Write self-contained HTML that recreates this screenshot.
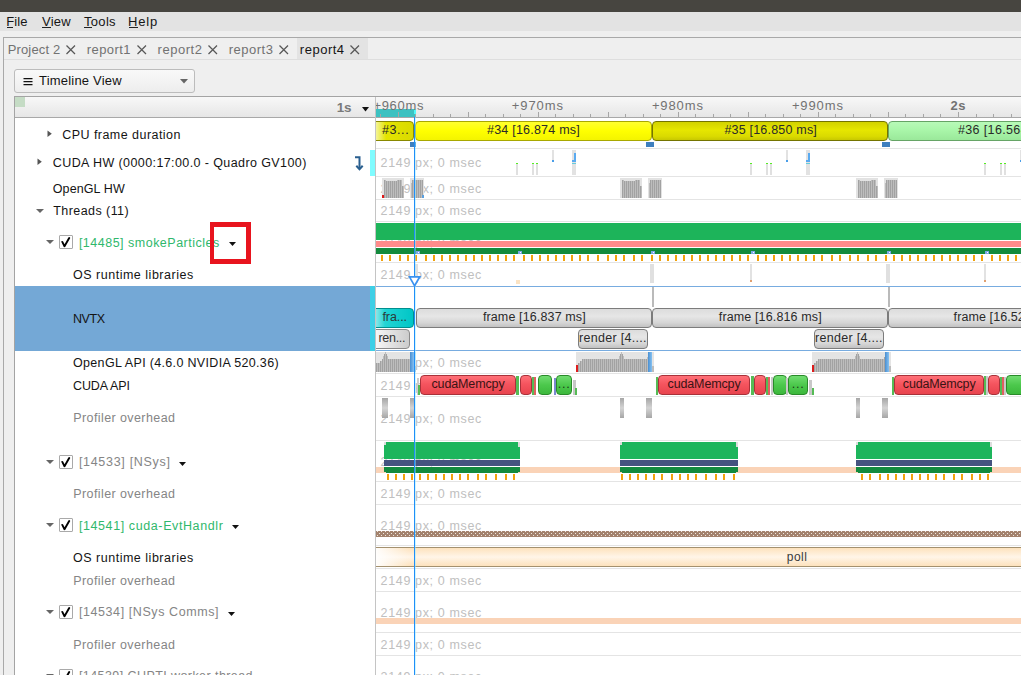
<!DOCTYPE html>
<html><head><meta charset="utf-8"><style>
html,body{margin:0;padding:0;width:1021px;height:675px;overflow:hidden;background:#efefef}
body{position:relative;font-family:"Liberation Sans",sans-serif}
.r,.t,.clip{position:absolute}
.t{white-space:pre}
.clip{overflow:hidden}
</style></head><body>
<div class="r" style="left:0px;top:0px;width:1021px;height:12px;background:#474540;"></div>
<div class="r" style="left:0px;top:12px;width:1021px;height:19px;background:#e3e3e3;"></div>
<div class="t" style="left:6.20px;top:13.69px;font-size:13px;line-height:16px;color:#161616;letter-spacing:0.100px;font-weight:normal;">File</div>
<div class="t" style="left:42.00px;top:13.69px;font-size:13px;line-height:16px;color:#161616;letter-spacing:0.267px;font-weight:normal;">View</div>
<div class="t" style="left:84.10px;top:13.69px;font-size:13px;line-height:16px;color:#161616;letter-spacing:0.275px;font-weight:normal;">Tools</div>
<div class="t" style="left:128.00px;top:13.69px;font-size:13px;line-height:16px;color:#161616;letter-spacing:0.833px;font-weight:normal;">Help</div>
<div class="r" style="left:7px;top:27px;width:6px;height:1px;background:#222;"></div>
<div class="r" style="left:42px;top:27px;width:9px;height:1px;background:#222;"></div>
<div class="r" style="left:84px;top:27px;width:8px;height:1px;background:#222;"></div>
<div class="r" style="left:129px;top:27px;width:9px;height:1px;background:#222;"></div>
<div class="r" style="left:0px;top:31px;width:1021px;height:644px;background:#efefef;"></div>
<div class="r" style="left:3px;top:37px;width:1018px;height:1px;background:#a9a9a9;"></div>
<div class="r" style="left:3px;top:37px;width:1px;height:638px;background:#a9a9a9;"></div>
<div class="r" style="left:297px;top:38px;width:71px;height:21px;background:#e3e3e3;"></div>
<div class="r" style="left:4px;top:59px;width:1017px;height:1px;background:#dedede;"></div>
<div class="t" style="left:7.70px;top:42.29px;font-size:13px;line-height:16px;color:#727272;letter-spacing:0.150px;font-weight:normal;">Project 2</div>
<svg class="r" style="left:66.1px;top:44.8px" width="10" height="10"><path d="M0.5 0.5L9 9M9 0.5L0.5 9" stroke="#585858" stroke-width="1.25"/></svg>
<div class="t" style="left:86.80px;top:42.29px;font-size:13px;line-height:16px;color:#727272;letter-spacing:0.417px;font-weight:normal;">report1</div>
<svg class="r" style="left:136.8px;top:44.8px" width="10" height="10"><path d="M0.5 0.5L9 9M9 0.5L0.5 9" stroke="#585858" stroke-width="1.25"/></svg>
<div class="t" style="left:157.60px;top:42.29px;font-size:13px;line-height:16px;color:#727272;letter-spacing:0.517px;font-weight:normal;">report2</div>
<svg class="r" style="left:208.1px;top:44.8px" width="10" height="10"><path d="M0.5 0.5L9 9M9 0.5L0.5 9" stroke="#585858" stroke-width="1.25"/></svg>
<div class="t" style="left:228.70px;top:42.29px;font-size:13px;line-height:16px;color:#727272;letter-spacing:0.517px;font-weight:normal;">report3</div>
<svg class="r" style="left:278.8px;top:44.8px" width="10" height="10"><path d="M0.5 0.5L9 9M9 0.5L0.5 9" stroke="#585858" stroke-width="1.25"/></svg>
<div class="t" style="left:299.80px;top:42.29px;font-size:13px;line-height:16px;color:#151515;letter-spacing:0.517px;font-weight:normal;">report4</div>
<svg class="r" style="left:349.9px;top:44.8px" width="10" height="10"><path d="M0.5 0.5L9 9M9 0.5L0.5 9" stroke="#585858" stroke-width="1.25"/></svg>
<div class="r" style="left:14px;top:69px;width:179px;height:22px;border:1px solid #bcbcbc;border-radius:3px;background:linear-gradient(#f9f9f9,#ededed)"></div>
<svg class="r" style="left:23px;top:77px" width="10" height="9"><path d="M0.5 1.5H9.5M0.5 4.5H9.5M0.5 7.5H9.5" stroke="#111" stroke-width="1.25"/></svg>
<div class="t" style="left:39.10px;top:72.99px;font-size:13px;line-height:16px;color:#141414;letter-spacing:0.192px;font-weight:normal;">Timeline View</div>
<svg class="r" style="left:180px;top:79px" width="8" height="5"><path d="M0 0H8L4 4.5Z" fill="#666"/></svg>
<div class="r" style="left:14px;top:96px;width:1007px;height:1px;background:#a4a4a4;"></div>
<div class="r" style="left:14px;top:96px;width:1px;height:579px;background:#a4a4a4;"></div>
<div class="r" style="left:15px;top:97px;width:1006px;height:20px;background:linear-gradient(#f8f8f8,#e6e6e6);"></div>
<div class="r" style="left:15px;top:117px;width:1006px;height:1px;background:#a8a8a8;"></div>
<div class="r" style="left:15px;top:97px;width:10px;height:10px;background:#c5dcc5;"></div>
<div class="t" style="left:336.70px;top:100.12px;font-size:13.5px;line-height:16px;color:#7a7a7a;letter-spacing:-0.100px;font-weight:bold;">1s</div>
<svg class="r" style="left:361.5px;top:106.5px" width="8" height="6"><path d="M0 0H7L3.5 4.5Z" fill="#111"/></svg>
<div class="r" style="left:15px;top:118px;width:1006px;height:557px;background:#ffffff;"></div>
<div class="r" style="left:375px;top:97px;width:1px;height:578px;background:#c4c4c4;"></div>
<div class="r" style="left:376px;top:109px;width:40px;height:8px;background:#3dc1c1;"></div>
<div class="r" style="left:414px;top:109px;width:2px;height:5px;background:#52f7f7;"></div>
<div class="r" style="left:380px;top:114px;width:1px;height:3px;background:#a6a6a6;"></div>
<div class="r" style="left:398px;top:112px;width:1px;height:5px;background:#a6a6a6;"></div>
<div class="r" style="left:415px;top:114px;width:1px;height:3px;background:#a6a6a6;"></div>
<div class="r" style="left:433px;top:114px;width:1px;height:3px;background:#a6a6a6;"></div>
<div class="r" style="left:450px;top:114px;width:1px;height:3px;background:#a6a6a6;"></div>
<div class="r" style="left:468px;top:112px;width:1px;height:5px;background:#a6a6a6;"></div>
<div class="r" style="left:485px;top:114px;width:1px;height:3px;background:#a6a6a6;"></div>
<div class="r" style="left:503px;top:114px;width:1px;height:3px;background:#a6a6a6;"></div>
<div class="r" style="left:520px;top:114px;width:1px;height:3px;background:#a6a6a6;"></div>
<div class="r" style="left:538px;top:112px;width:1px;height:5px;background:#a6a6a6;"></div>
<div class="r" style="left:555px;top:114px;width:1px;height:3px;background:#a6a6a6;"></div>
<div class="r" style="left:573px;top:114px;width:1px;height:3px;background:#a6a6a6;"></div>
<div class="r" style="left:590px;top:114px;width:1px;height:3px;background:#a6a6a6;"></div>
<div class="r" style="left:608px;top:112px;width:1px;height:5px;background:#a6a6a6;"></div>
<div class="r" style="left:625px;top:114px;width:1px;height:3px;background:#a6a6a6;"></div>
<div class="r" style="left:643px;top:114px;width:1px;height:3px;background:#a6a6a6;"></div>
<div class="r" style="left:660px;top:114px;width:1px;height:3px;background:#a6a6a6;"></div>
<div class="r" style="left:678px;top:112px;width:1px;height:5px;background:#a6a6a6;"></div>
<div class="r" style="left:695px;top:114px;width:1px;height:3px;background:#a6a6a6;"></div>
<div class="r" style="left:713px;top:114px;width:1px;height:3px;background:#a6a6a6;"></div>
<div class="r" style="left:730px;top:114px;width:1px;height:3px;background:#a6a6a6;"></div>
<div class="r" style="left:748px;top:112px;width:1px;height:5px;background:#a6a6a6;"></div>
<div class="r" style="left:765px;top:114px;width:1px;height:3px;background:#a6a6a6;"></div>
<div class="r" style="left:783px;top:114px;width:1px;height:3px;background:#a6a6a6;"></div>
<div class="r" style="left:800px;top:114px;width:1px;height:3px;background:#a6a6a6;"></div>
<div class="r" style="left:818px;top:112px;width:1px;height:5px;background:#a6a6a6;"></div>
<div class="r" style="left:835px;top:114px;width:1px;height:3px;background:#a6a6a6;"></div>
<div class="r" style="left:853px;top:114px;width:1px;height:3px;background:#a6a6a6;"></div>
<div class="r" style="left:870px;top:114px;width:1px;height:3px;background:#a6a6a6;"></div>
<div class="r" style="left:888px;top:112px;width:1px;height:5px;background:#a6a6a6;"></div>
<div class="r" style="left:905px;top:114px;width:1px;height:3px;background:#a6a6a6;"></div>
<div class="r" style="left:923px;top:114px;width:1px;height:3px;background:#a6a6a6;"></div>
<div class="r" style="left:940px;top:114px;width:1px;height:3px;background:#a6a6a6;"></div>
<div class="r" style="left:958px;top:112px;width:1px;height:5px;background:#a6a6a6;"></div>
<div class="r" style="left:976px;top:114px;width:1px;height:3px;background:#a6a6a6;"></div>
<div class="r" style="left:993px;top:114px;width:1px;height:3px;background:#a6a6a6;"></div>
<div class="r" style="left:1011px;top:114px;width:1px;height:3px;background:#a6a6a6;"></div>
<div class="clip" style="left:376px;top:96px;width:645px;height:21px">
<div class="t" style="left:-2.60px;top:2.09px;font-size:13px;line-height:16px;color:#727272;letter-spacing:0.680px;font-weight:normal;">+960ms</div>
<div class="t" style="left:135.80px;top:2.09px;font-size:13px;line-height:16px;color:#727272;letter-spacing:0.920px;font-weight:normal;">+970ms</div>
<div class="t" style="left:275.90px;top:2.09px;font-size:13px;line-height:16px;color:#727272;letter-spacing:0.880px;font-weight:normal;">+980ms</div>
<div class="t" style="left:415.90px;top:2.09px;font-size:13px;line-height:16px;color:#727272;letter-spacing:0.880px;font-weight:normal;">+990ms</div>
<div class="t" style="left:574.40px;top:2.09px;font-size:13px;line-height:16px;color:#727272;letter-spacing:0.600px;font-weight:bold;">2s</div>
</div>
<div class="r" style="left:376px;top:148px;width:645px;height:1px;background:#e4e4e4;"></div>
<div class="r" style="left:376px;top:176px;width:645px;height:1px;background:#e4e4e4;"></div>
<div class="r" style="left:376px;top:199px;width:645px;height:1px;background:#e4e4e4;"></div>
<div class="r" style="left:376px;top:221px;width:645px;height:1px;background:#e4e4e4;"></div>
<div class="r" style="left:376px;top:262px;width:645px;height:1px;background:#e4e4e4;"></div>
<div class="r" style="left:376px;top:373px;width:645px;height:1px;background:#e4e4e4;"></div>
<div class="r" style="left:376px;top:396px;width:645px;height:1px;background:#e4e4e4;"></div>
<div class="r" style="left:376px;top:440px;width:645px;height:1px;background:#e4e4e4;"></div>
<div class="r" style="left:376px;top:481px;width:645px;height:1px;background:#e4e4e4;"></div>
<div class="r" style="left:376px;top:504px;width:645px;height:1px;background:#e4e4e4;"></div>
<div class="r" style="left:376px;top:545px;width:645px;height:1px;background:#e4e4e4;"></div>
<div class="r" style="left:376px;top:568px;width:645px;height:1px;background:#e4e4e4;"></div>
<div class="r" style="left:376px;top:591px;width:645px;height:1px;background:#e4e4e4;"></div>
<div class="r" style="left:376px;top:632px;width:645px;height:1px;background:#e4e4e4;"></div>
<div class="r" style="left:376px;top:655px;width:645px;height:1px;background:#e4e4e4;"></div>
<div class="t" style="left:380.60px;top:155.97px;font-size:12.5px;line-height:15px;color:#c0c0c0;letter-spacing:0.643px;font-weight:normal;">2149 px; 0 msec</div>
<div class="t" style="left:380.60px;top:181.97px;font-size:12.5px;line-height:15px;color:#c0c0c0;letter-spacing:0.643px;font-weight:normal;">2149 px; 0 msec</div>
<div class="t" style="left:380.60px;top:203.77px;font-size:12.5px;line-height:15px;color:#c0c0c0;letter-spacing:0.643px;font-weight:normal;">2149 px; 0 msec</div>
<div class="t" style="left:380.60px;top:235.97px;font-size:12.5px;line-height:15px;color:#c0c0c0;letter-spacing:0.643px;font-weight:normal;">2149 px; 0 msec</div>
<div class="t" style="left:380.60px;top:267.97px;font-size:12.5px;line-height:15px;color:#c0c0c0;letter-spacing:0.643px;font-weight:normal;">2149 px; 0 msec</div>
<div class="t" style="left:380.60px;top:355.97px;font-size:12.5px;line-height:15px;color:#c0c0c0;letter-spacing:0.643px;font-weight:normal;">2149 px; 0 msec</div>
<div class="t" style="left:380.60px;top:378.97px;font-size:12.5px;line-height:15px;color:#c0c0c0;letter-spacing:0.643px;font-weight:normal;">2149 px; 0 msec</div>
<div class="t" style="left:380.60px;top:411.97px;font-size:12.5px;line-height:15px;color:#c0c0c0;letter-spacing:0.643px;font-weight:normal;">2149 px; 0 msec</div>
<div class="t" style="left:380.60px;top:454.97px;font-size:12.5px;line-height:15px;color:#c0c0c0;letter-spacing:0.643px;font-weight:normal;">2149 px; 0 msec</div>
<div class="t" style="left:380.60px;top:486.97px;font-size:12.5px;line-height:15px;color:#c0c0c0;letter-spacing:0.643px;font-weight:normal;">2149 px; 0 msec</div>
<div class="t" style="left:380.60px;top:518.97px;font-size:12.5px;line-height:15px;color:#c0c0c0;letter-spacing:0.643px;font-weight:normal;">2149 px; 0 msec</div>
<div class="t" style="left:380.60px;top:550.97px;font-size:12.5px;line-height:15px;color:#c0c0c0;letter-spacing:0.643px;font-weight:normal;">2149 px; 0 msec</div>
<div class="t" style="left:380.60px;top:573.97px;font-size:12.5px;line-height:15px;color:#c0c0c0;letter-spacing:0.643px;font-weight:normal;">2149 px; 0 msec</div>
<div class="t" style="left:380.60px;top:605.97px;font-size:12.5px;line-height:15px;color:#c0c0c0;letter-spacing:0.643px;font-weight:normal;">2149 px; 0 msec</div>
<div class="t" style="left:380.60px;top:637.97px;font-size:12.5px;line-height:15px;color:#c0c0c0;letter-spacing:0.643px;font-weight:normal;">2149 px; 0 msec</div>
<div class="t" style="left:380.60px;top:669.97px;font-size:12.5px;line-height:15px;color:#c0c0c0;letter-spacing:0.643px;font-weight:normal;">2149 px; 0 msec</div>
<div class="clip" style="left:376px;top:118px;width:645px;height:557px">
<div class="r" style="left:-16px;top:3px;width:52px;height:18px;background:linear-gradient(90deg,#ffffff 16%,#e4e400 48%,#dada00 100%);border:1px solid #888800;border-radius:4px"></div>
<div class="t" style="left:6.10px;top:4.87px;font-size:12.5px;line-height:15px;color:#2a2a2a;letter-spacing:0.550px;font-weight:normal;">#3...</div>
<div class="r" style="left:39px;top:3px;width:235px;height:18px;background:linear-gradient(#ffff30,#ffff00 50%,#f4f400);border:1px solid #a8a800;border-radius:4px"></div>
<div class="t" style="left:111.00px;top:4.87px;font-size:12.5px;line-height:15px;color:#2a2a2a;letter-spacing:0.221px;font-weight:normal;">#34 [16.874 ms]</div>
<div class="r" style="left:276px;top:3px;width:234px;height:18px;background:linear-gradient(#d2d200,#e6e600 45%,#dada00 80%,#c8c800);border:1px solid #747400;border-radius:4px"></div>
<div class="t" style="left:348.40px;top:4.87px;font-size:12.5px;line-height:15px;color:#2a2a2a;letter-spacing:0.200px;font-weight:normal;">#35 [16.850 ms]</div>
<div class="r" style="left:512px;top:3px;width:234px;height:18px;background:linear-gradient(#b8fab8,#a8f5a8 50%,#9ae89a);border:1px solid #66a466;border-radius:4px"></div>
<div class="t" style="left:582.00px;top:4.87px;font-size:12.5px;line-height:15px;color:#2a2a2a;letter-spacing:0.357px;font-weight:normal;">#36 [16.564 ms]</div>
<div class="r" style="left:34px;top:24px;width:6px;height:5px;background:#3e7fbf;"></div>
<div class="r" style="left:270px;top:24px;width:8px;height:5px;background:#3e7fbf;"></div>
<div class="r" style="left:506px;top:24px;width:8px;height:5px;background:#3e7fbf;"></div>
<div class="r" style="left:140px;top:45px;width:2px;height:12px;background:#e0e0e0;"></div>
<div class="r" style="left:140px;top:45px;width:2px;height:1px;background:#55ee22;"></div>
<div class="r" style="left:156px;top:45px;width:2px;height:12px;background:#e0e0e0;"></div>
<div class="r" style="left:156px;top:45px;width:2px;height:1px;background:#55ee22;"></div>
<div class="r" style="left:160px;top:45px;width:2px;height:12px;background:#e0e0e0;"></div>
<div class="r" style="left:160px;top:45px;width:2px;height:1px;background:#55ee22;"></div>
<div class="r" style="left:176px;top:32px;width:2px;height:12px;background:#e2e2e2;"></div>
<div class="r" style="left:176px;top:42px;width:2px;height:2px;background:#4a9ee8;"></div>
<div class="r" style="left:196px;top:32px;width:4px;height:25px;background:#e2e2e2;"></div>
<div class="r" style="left:198px;top:35px;width:2px;height:9px;background:#5aaaf0;"></div>
<div class="r" style="left:196px;top:42px;width:4px;height:2px;background:#5aaaf0;"></div>
<div class="r" style="left:196px;top:45px;width:4px;height:1px;background:#66ccdd;"></div>
<div class="r" style="left:374px;top:45px;width:2px;height:12px;background:#e0e0e0;"></div>
<div class="r" style="left:374px;top:45px;width:2px;height:1px;background:#55ee22;"></div>
<div class="r" style="left:390px;top:45px;width:2px;height:12px;background:#e0e0e0;"></div>
<div class="r" style="left:390px;top:45px;width:2px;height:1px;background:#55ee22;"></div>
<div class="r" style="left:394px;top:45px;width:2px;height:12px;background:#e0e0e0;"></div>
<div class="r" style="left:394px;top:45px;width:2px;height:1px;background:#55ee22;"></div>
<div class="r" style="left:410px;top:32px;width:2px;height:12px;background:#e2e2e2;"></div>
<div class="r" style="left:410px;top:42px;width:2px;height:2px;background:#4a9ee8;"></div>
<div class="r" style="left:430px;top:32px;width:4px;height:25px;background:#e2e2e2;"></div>
<div class="r" style="left:432px;top:35px;width:2px;height:9px;background:#5aaaf0;"></div>
<div class="r" style="left:430px;top:42px;width:4px;height:2px;background:#5aaaf0;"></div>
<div class="r" style="left:430px;top:45px;width:4px;height:1px;background:#66ccdd;"></div>
<div class="r" style="left:608px;top:45px;width:2px;height:12px;background:#e0e0e0;"></div>
<div class="r" style="left:608px;top:45px;width:2px;height:1px;background:#55ee22;"></div>
<div class="r" style="left:624px;top:45px;width:2px;height:12px;background:#e0e0e0;"></div>
<div class="r" style="left:624px;top:45px;width:2px;height:1px;background:#55ee22;"></div>
<div class="r" style="left:628px;top:45px;width:2px;height:12px;background:#e0e0e0;"></div>
<div class="r" style="left:628px;top:45px;width:2px;height:1px;background:#55ee22;"></div>
<div class="r" style="left:644px;top:32px;width:2px;height:12px;background:#e2e2e2;"></div>
<div class="r" style="left:644px;top:42px;width:2px;height:2px;background:#4a9ee8;"></div>
<div class="r" style="left:664px;top:32px;width:4px;height:25px;background:#e2e2e2;"></div>
<div class="r" style="left:666px;top:35px;width:2px;height:9px;background:#5aaaf0;"></div>
<div class="r" style="left:664px;top:42px;width:4px;height:2px;background:#5aaaf0;"></div>
<div class="r" style="left:664px;top:45px;width:4px;height:1px;background:#66ccdd;"></div>
<svg class="r" style="left:6px;top:60px" width="22" height="20"><rect x="0" y="0" width="22" height="20" fill="#e2e2e2"/><rect x="2" y="2" width="1" height="18" fill="#a2a2a2"/><rect x="3" y="2" width="1" height="18" fill="#bdbdbd"/><rect x="4" y="3" width="1" height="17" fill="#a2a2a2"/><rect x="5" y="3" width="1" height="17" fill="#bdbdbd"/><rect x="6" y="3" width="1" height="17" fill="#a2a2a2"/><rect x="7" y="3" width="1" height="17" fill="#bdbdbd"/><rect x="8" y="3" width="1" height="17" fill="#a2a2a2"/><rect x="9" y="3" width="1" height="17" fill="#bdbdbd"/><rect x="10" y="3" width="1" height="17" fill="#a2a2a2"/><rect x="11" y="3" width="1" height="17" fill="#bdbdbd"/><rect x="12" y="3" width="1" height="17" fill="#a2a2a2"/><rect x="13" y="3" width="1" height="17" fill="#bdbdbd"/><rect x="14" y="3" width="1" height="17" fill="#a2a2a2"/><rect x="15" y="2" width="1" height="18" fill="#bdbdbd"/><rect x="16" y="2" width="1" height="18" fill="#a2a2a2"/><rect x="17" y="2" width="1" height="18" fill="#bdbdbd"/><rect x="18" y="2" width="1" height="18" fill="#a2a2a2"/><rect x="19" y="2" width="1" height="18" fill="#bdbdbd"/><rect x="20" y="8" width="1" height="12" fill="#a2a2a2"/><rect x="21" y="8" width="1" height="12" fill="#bdbdbd"/></svg>
<svg class="r" style="left:34px;top:60px" width="14" height="20"><rect x="0" y="0" width="14" height="20" fill="#e2e2e2"/><rect x="1" y="5" width="1" height="15" fill="#bdbdbd"/><rect x="2" y="2" width="1" height="18" fill="#a2a2a2"/><rect x="3" y="2" width="1" height="18" fill="#bdbdbd"/><rect x="4" y="2" width="1" height="18" fill="#a2a2a2"/><rect x="5" y="2" width="1" height="18" fill="#bdbdbd"/><rect x="6" y="2" width="1" height="18" fill="#a2a2a2"/><rect x="7" y="2" width="1" height="18" fill="#bdbdbd"/><rect x="8" y="2" width="1" height="18" fill="#a2a2a2"/><rect x="9" y="2" width="1" height="18" fill="#bdbdbd"/><rect x="10" y="2" width="1" height="18" fill="#a2a2a2"/><rect x="11" y="2" width="1" height="18" fill="#bdbdbd"/><rect x="12" y="2" width="1" height="18" fill="#a2a2a2"/></svg>
<svg class="r" style="left:244px;top:60px" width="22" height="20"><rect x="0" y="0" width="22" height="20" fill="#e2e2e2"/><rect x="2" y="2" width="1" height="18" fill="#a2a2a2"/><rect x="3" y="2" width="1" height="18" fill="#bdbdbd"/><rect x="4" y="3" width="1" height="17" fill="#a2a2a2"/><rect x="5" y="3" width="1" height="17" fill="#bdbdbd"/><rect x="6" y="3" width="1" height="17" fill="#a2a2a2"/><rect x="7" y="3" width="1" height="17" fill="#bdbdbd"/><rect x="8" y="3" width="1" height="17" fill="#a2a2a2"/><rect x="9" y="3" width="1" height="17" fill="#bdbdbd"/><rect x="10" y="3" width="1" height="17" fill="#a2a2a2"/><rect x="11" y="3" width="1" height="17" fill="#bdbdbd"/><rect x="12" y="3" width="1" height="17" fill="#a2a2a2"/><rect x="13" y="3" width="1" height="17" fill="#bdbdbd"/><rect x="14" y="3" width="1" height="17" fill="#a2a2a2"/><rect x="15" y="2" width="1" height="18" fill="#bdbdbd"/><rect x="16" y="2" width="1" height="18" fill="#a2a2a2"/><rect x="17" y="2" width="1" height="18" fill="#bdbdbd"/><rect x="18" y="2" width="1" height="18" fill="#a2a2a2"/><rect x="19" y="2" width="1" height="18" fill="#bdbdbd"/><rect x="20" y="8" width="1" height="12" fill="#a2a2a2"/><rect x="21" y="8" width="1" height="12" fill="#bdbdbd"/></svg>
<svg class="r" style="left:272px;top:60px" width="14" height="20"><rect x="0" y="0" width="14" height="20" fill="#e2e2e2"/><rect x="1" y="5" width="1" height="15" fill="#bdbdbd"/><rect x="2" y="2" width="1" height="18" fill="#a2a2a2"/><rect x="3" y="2" width="1" height="18" fill="#bdbdbd"/><rect x="4" y="2" width="1" height="18" fill="#a2a2a2"/><rect x="5" y="2" width="1" height="18" fill="#bdbdbd"/><rect x="6" y="2" width="1" height="18" fill="#a2a2a2"/><rect x="7" y="2" width="1" height="18" fill="#bdbdbd"/><rect x="8" y="2" width="1" height="18" fill="#a2a2a2"/><rect x="9" y="2" width="1" height="18" fill="#bdbdbd"/><rect x="10" y="2" width="1" height="18" fill="#a2a2a2"/><rect x="11" y="2" width="1" height="18" fill="#bdbdbd"/><rect x="12" y="2" width="1" height="18" fill="#a2a2a2"/></svg>
<svg class="r" style="left:480px;top:60px" width="22" height="20"><rect x="0" y="0" width="22" height="20" fill="#e2e2e2"/><rect x="2" y="2" width="1" height="18" fill="#a2a2a2"/><rect x="3" y="2" width="1" height="18" fill="#bdbdbd"/><rect x="4" y="3" width="1" height="17" fill="#a2a2a2"/><rect x="5" y="3" width="1" height="17" fill="#bdbdbd"/><rect x="6" y="3" width="1" height="17" fill="#a2a2a2"/><rect x="7" y="3" width="1" height="17" fill="#bdbdbd"/><rect x="8" y="3" width="1" height="17" fill="#a2a2a2"/><rect x="9" y="3" width="1" height="17" fill="#bdbdbd"/><rect x="10" y="3" width="1" height="17" fill="#a2a2a2"/><rect x="11" y="3" width="1" height="17" fill="#bdbdbd"/><rect x="12" y="3" width="1" height="17" fill="#a2a2a2"/><rect x="13" y="3" width="1" height="17" fill="#bdbdbd"/><rect x="14" y="3" width="1" height="17" fill="#a2a2a2"/><rect x="15" y="2" width="1" height="18" fill="#bdbdbd"/><rect x="16" y="2" width="1" height="18" fill="#a2a2a2"/><rect x="17" y="2" width="1" height="18" fill="#bdbdbd"/><rect x="18" y="2" width="1" height="18" fill="#a2a2a2"/><rect x="19" y="2" width="1" height="18" fill="#bdbdbd"/><rect x="20" y="8" width="1" height="12" fill="#a2a2a2"/><rect x="21" y="8" width="1" height="12" fill="#bdbdbd"/></svg>
<svg class="r" style="left:508px;top:60px" width="14" height="20"><rect x="0" y="0" width="14" height="20" fill="#e2e2e2"/><rect x="1" y="5" width="1" height="15" fill="#bdbdbd"/><rect x="2" y="2" width="1" height="18" fill="#a2a2a2"/><rect x="3" y="2" width="1" height="18" fill="#bdbdbd"/><rect x="4" y="2" width="1" height="18" fill="#a2a2a2"/><rect x="5" y="2" width="1" height="18" fill="#bdbdbd"/><rect x="6" y="2" width="1" height="18" fill="#a2a2a2"/><rect x="7" y="2" width="1" height="18" fill="#bdbdbd"/><rect x="8" y="2" width="1" height="18" fill="#a2a2a2"/><rect x="9" y="2" width="1" height="18" fill="#bdbdbd"/><rect x="10" y="2" width="1" height="18" fill="#a2a2a2"/><rect x="11" y="2" width="1" height="18" fill="#bdbdbd"/><rect x="12" y="2" width="1" height="18" fill="#a2a2a2"/></svg>
<div class="r" style="left:6px;top:77px;width:2px;height:3px;background:#e01818;"></div>
<div class="r" style="left:46px;top:77px;width:2px;height:3px;background:#5aa0e0;"></div>
<div class="r" style="left:0px;top:105px;width:645px;height:17px;background:#1db45a;"></div>
<div class="r" style="left:0px;top:123px;width:645px;height:6px;background:#ff8b8b;"></div>
<div class="r" style="left:0px;top:130px;width:645px;height:6px;background:#138a3d;"></div>
<div class="r" style="left:5px;top:137px;width:2px;height:6px;background:#f2a20c;"></div>
<div class="r" style="left:13px;top:137px;width:2px;height:6px;background:#f2a20c;"></div>
<div class="r" style="left:23px;top:137px;width:2px;height:6px;background:#f2a20c;"></div>
<div class="r" style="left:31px;top:137px;width:2px;height:6px;background:#f2a20c;"></div>
<div class="r" style="left:39px;top:137px;width:2px;height:6px;background:#f2a20c;"></div>
<div class="r" style="left:49px;top:137px;width:2px;height:6px;background:#f2a20c;"></div>
<div class="r" style="left:57px;top:137px;width:2px;height:6px;background:#f2a20c;"></div>
<div class="r" style="left:65px;top:137px;width:2px;height:6px;background:#f2a20c;"></div>
<div class="r" style="left:73px;top:137px;width:2px;height:6px;background:#f2a20c;"></div>
<div class="r" style="left:81px;top:137px;width:2px;height:6px;background:#f2a20c;"></div>
<div class="r" style="left:89px;top:137px;width:2px;height:6px;background:#f2a20c;"></div>
<div class="r" style="left:97px;top:137px;width:2px;height:6px;background:#f2a20c;"></div>
<div class="r" style="left:105px;top:137px;width:2px;height:6px;background:#f2a20c;"></div>
<div class="r" style="left:113px;top:137px;width:2px;height:6px;background:#f2a20c;"></div>
<div class="r" style="left:121px;top:137px;width:2px;height:6px;background:#f2a20c;"></div>
<div class="r" style="left:129px;top:137px;width:2px;height:6px;background:#f2a20c;"></div>
<div class="r" style="left:137px;top:137px;width:2px;height:6px;background:#f2a20c;"></div>
<div class="r" style="left:147px;top:137px;width:2px;height:6px;background:#f2a20c;"></div>
<div class="r" style="left:155px;top:137px;width:2px;height:6px;background:#f2a20c;"></div>
<div class="r" style="left:163px;top:137px;width:2px;height:6px;background:#f2a20c;"></div>
<div class="r" style="left:171px;top:137px;width:2px;height:6px;background:#f2a20c;"></div>
<div class="r" style="left:179px;top:137px;width:2px;height:6px;background:#f2a20c;"></div>
<div class="r" style="left:187px;top:137px;width:2px;height:6px;background:#f2a20c;"></div>
<div class="r" style="left:195px;top:137px;width:2px;height:6px;background:#f2a20c;"></div>
<div class="r" style="left:203px;top:137px;width:2px;height:6px;background:#f2a20c;"></div>
<div class="r" style="left:211px;top:137px;width:2px;height:6px;background:#f2a20c;"></div>
<div class="r" style="left:221px;top:137px;width:2px;height:6px;background:#f2a20c;"></div>
<div class="r" style="left:231px;top:137px;width:2px;height:6px;background:#f2a20c;"></div>
<div class="r" style="left:239px;top:137px;width:2px;height:6px;background:#f2a20c;"></div>
<div class="r" style="left:247px;top:137px;width:2px;height:6px;background:#f2a20c;"></div>
<div class="r" style="left:257px;top:137px;width:2px;height:6px;background:#f2a20c;"></div>
<div class="r" style="left:265px;top:137px;width:2px;height:6px;background:#f2a20c;"></div>
<div class="r" style="left:275px;top:137px;width:2px;height:6px;background:#f2a20c;"></div>
<div class="r" style="left:283px;top:137px;width:2px;height:6px;background:#f2a20c;"></div>
<div class="r" style="left:291px;top:137px;width:2px;height:6px;background:#f2a20c;"></div>
<div class="r" style="left:299px;top:137px;width:2px;height:6px;background:#f2a20c;"></div>
<div class="r" style="left:307px;top:137px;width:2px;height:6px;background:#f2a20c;"></div>
<div class="r" style="left:315px;top:137px;width:2px;height:6px;background:#f2a20c;"></div>
<div class="r" style="left:323px;top:137px;width:2px;height:6px;background:#f2a20c;"></div>
<div class="r" style="left:331px;top:137px;width:2px;height:6px;background:#f2a20c;"></div>
<div class="r" style="left:339px;top:137px;width:2px;height:6px;background:#f2a20c;"></div>
<div class="r" style="left:347px;top:137px;width:2px;height:6px;background:#f2a20c;"></div>
<div class="r" style="left:355px;top:137px;width:2px;height:6px;background:#f2a20c;"></div>
<div class="r" style="left:363px;top:137px;width:2px;height:6px;background:#f2a20c;"></div>
<div class="r" style="left:371px;top:137px;width:2px;height:6px;background:#f2a20c;"></div>
<div class="r" style="left:381px;top:137px;width:2px;height:6px;background:#f2a20c;"></div>
<div class="r" style="left:389px;top:137px;width:2px;height:6px;background:#f2a20c;"></div>
<div class="r" style="left:397px;top:137px;width:2px;height:6px;background:#f2a20c;"></div>
<div class="r" style="left:405px;top:137px;width:2px;height:6px;background:#f2a20c;"></div>
<div class="r" style="left:413px;top:137px;width:2px;height:6px;background:#f2a20c;"></div>
<div class="r" style="left:421px;top:137px;width:2px;height:6px;background:#f2a20c;"></div>
<div class="r" style="left:429px;top:137px;width:2px;height:6px;background:#f2a20c;"></div>
<div class="r" style="left:437px;top:137px;width:2px;height:6px;background:#f2a20c;"></div>
<div class="r" style="left:445px;top:137px;width:2px;height:6px;background:#f2a20c;"></div>
<div class="r" style="left:455px;top:137px;width:2px;height:6px;background:#f2a20c;"></div>
<div class="r" style="left:463px;top:137px;width:2px;height:6px;background:#f2a20c;"></div>
<div class="r" style="left:473px;top:137px;width:2px;height:6px;background:#f2a20c;"></div>
<div class="r" style="left:481px;top:137px;width:2px;height:6px;background:#f2a20c;"></div>
<div class="r" style="left:491px;top:137px;width:2px;height:6px;background:#f2a20c;"></div>
<div class="r" style="left:499px;top:137px;width:2px;height:6px;background:#f2a20c;"></div>
<div class="r" style="left:509px;top:137px;width:2px;height:6px;background:#f2a20c;"></div>
<div class="r" style="left:517px;top:137px;width:2px;height:6px;background:#f2a20c;"></div>
<div class="r" style="left:525px;top:137px;width:2px;height:6px;background:#f2a20c;"></div>
<div class="r" style="left:533px;top:137px;width:2px;height:6px;background:#f2a20c;"></div>
<div class="r" style="left:541px;top:137px;width:2px;height:6px;background:#f2a20c;"></div>
<div class="r" style="left:549px;top:137px;width:2px;height:6px;background:#f2a20c;"></div>
<div class="r" style="left:557px;top:137px;width:2px;height:6px;background:#f2a20c;"></div>
<div class="r" style="left:565px;top:137px;width:2px;height:6px;background:#f2a20c;"></div>
<div class="r" style="left:573px;top:137px;width:2px;height:6px;background:#f2a20c;"></div>
<div class="r" style="left:581px;top:137px;width:2px;height:6px;background:#f2a20c;"></div>
<div class="r" style="left:589px;top:137px;width:2px;height:6px;background:#f2a20c;"></div>
<div class="r" style="left:597px;top:137px;width:2px;height:6px;background:#f2a20c;"></div>
<div class="r" style="left:605px;top:137px;width:2px;height:6px;background:#f2a20c;"></div>
<div class="r" style="left:615px;top:137px;width:2px;height:6px;background:#f2a20c;"></div>
<div class="r" style="left:623px;top:137px;width:2px;height:6px;background:#f2a20c;"></div>
<div class="r" style="left:631px;top:137px;width:2px;height:6px;background:#f2a20c;"></div>
<div class="r" style="left:639px;top:137px;width:2px;height:6px;background:#f2a20c;"></div>
<div class="r" style="left:40px;top:133px;width:4px;height:3px;background:#7aa6e6;"></div>
<div class="r" style="left:42px;top:134px;width:1px;height:1px;background:#ffffff;"></div>
<div class="r" style="left:142px;top:133px;width:4px;height:3px;background:#7aa6e6;"></div>
<div class="r" style="left:144px;top:134px;width:1px;height:1px;background:#ffffff;"></div>
<div class="r" style="left:275px;top:133px;width:4px;height:3px;background:#7aa6e6;"></div>
<div class="r" style="left:277px;top:134px;width:1px;height:1px;background:#ffffff;"></div>
<div class="r" style="left:375px;top:133px;width:4px;height:3px;background:#7aa6e6;"></div>
<div class="r" style="left:377px;top:134px;width:1px;height:1px;background:#ffffff;"></div>
<div class="r" style="left:511px;top:133px;width:4px;height:3px;background:#7aa6e6;"></div>
<div class="r" style="left:513px;top:134px;width:1px;height:1px;background:#ffffff;"></div>
<div class="r" style="left:609px;top:133px;width:4px;height:3px;background:#7aa6e6;"></div>
<div class="r" style="left:611px;top:134px;width:1px;height:1px;background:#ffffff;"></div>
<div class="r" style="left:39px;top:146px;width:3px;height:19px;background:#e0e0e0;"></div>
<div class="r" style="left:274px;top:146px;width:4px;height:19px;background:#e0e0e0;"></div>
<div class="r" style="left:510px;top:146px;width:4px;height:19px;background:#e0e0e0;"></div>
<div class="r" style="left:374px;top:146px;width:2px;height:18px;background:#e2e2e2;"></div>
<div class="r" style="left:374px;top:162px;width:2px;height:2px;background:#e0a070;"></div>
<div class="r" style="left:608px;top:146px;width:2px;height:18px;background:#e2e2e2;"></div>
<div class="r" style="left:608px;top:162px;width:2px;height:2px;background:#e0a070;"></div>
<div class="r" style="left:140px;top:162px;width:4px;height:4px;background:#fbe3c3;"></div>
<div class="r" style="left:0px;top:168px;width:645px;height:1px;background:#78ace0;"></div>
<div class="r" style="left:0px;top:232px;width:645px;height:1px;background:#78ace0;"></div>
<div class="r" style="left:276px;top:169px;width:2px;height:20px;background:#bababa;"></div>
<div class="r" style="left:512px;top:169px;width:2px;height:20px;background:#bababa;"></div>
<div class="r" style="left:-20px;top:190px;width:56px;height:18px;background:linear-gradient(90deg,#ffffff 15%,#22d4d4 50%,#00c6c6 100%);border:1px solid #008f8f;border-radius:4px"></div>
<div class="t" style="left:6.50px;top:191.87px;font-size:12.5px;line-height:15px;color:#2a3a3a;letter-spacing:-0.100px;font-weight:normal;">fra...</div>
<div class="r" style="left:40px;top:190px;width:234px;height:18px;background:linear-gradient(#dcdcdc,#e6e6e6 40%,#d6d6d6 75%,#c2c2c2);border:1px solid #7c7c7c;border-radius:4px"></div>
<div class="t" style="left:106.90px;top:191.87px;font-size:12.5px;line-height:15px;color:#2a2a2a;letter-spacing:0.131px;font-weight:normal;">frame [16.837 ms]</div>
<div class="r" style="left:276px;top:190px;width:234px;height:18px;background:linear-gradient(#dcdcdc,#e6e6e6 40%,#d6d6d6 75%,#c2c2c2);border:1px solid #7c7c7c;border-radius:4px"></div>
<div class="t" style="left:342.80px;top:191.87px;font-size:12.5px;line-height:15px;color:#2a2a2a;letter-spacing:0.131px;font-weight:normal;">frame [16.816 ms]</div>
<div class="r" style="left:512px;top:190px;width:234px;height:18px;background:linear-gradient(#dcdcdc,#e6e6e6 40%,#d6d6d6 75%,#c2c2c2);border:1px solid #7c7c7c;border-radius:4px"></div>
<div class="t" style="left:577.60px;top:191.87px;font-size:12.5px;line-height:15px;color:#2a2a2a;letter-spacing:0.094px;font-weight:normal;">frame [16.528 ms]</div>
<div class="r" style="left:-20px;top:211px;width:52px;height:18px;background:linear-gradient(90deg,#ffffff 25%,#e6e6e6 60%,#cccccc);border:1px solid #8a8a8a;border-radius:4px"></div>
<div class="t" style="left:2.50px;top:212.97px;font-size:12.5px;line-height:15px;color:#333;letter-spacing:-0.300px;font-weight:normal;">ren...</div>
<div class="r" style="left:202px;top:211px;width:68px;height:18px;background:linear-gradient(#dcdcdc,#e6e6e6 40%,#d6d6d6 75%,#c2c2c2);border:1px solid #7c7c7c;border-radius:4px"></div>
<div class="t" style="left:203.10px;top:212.97px;font-size:12.5px;line-height:15px;color:#2a2a2a;letter-spacing:0.283px;font-weight:normal;">render [4....</div>
<div class="r" style="left:438px;top:211px;width:68px;height:18px;background:linear-gradient(#dcdcdc,#e6e6e6 40%,#d6d6d6 75%,#c2c2c2);border:1px solid #7c7c7c;border-radius:4px"></div>
<div class="t" style="left:439.10px;top:212.97px;font-size:12.5px;line-height:15px;color:#2a2a2a;letter-spacing:0.283px;font-weight:normal;">render [4....</div>
<svg class="r" style="left:0px;top:234px" width="40" height="20"><rect x="0" y="0" width="40" height="20" fill="#e4e4e4"/><rect x="0" y="11" width="1" height="9" fill="#a2a2a2"/><rect x="1" y="11" width="1" height="9" fill="#bdbdbd"/><rect x="2" y="11" width="1" height="9" fill="#a2a2a2"/><rect x="3" y="11" width="1" height="9" fill="#bdbdbd"/><rect x="4" y="9" width="1" height="11" fill="#a2a2a2"/><rect x="5" y="9" width="1" height="11" fill="#bdbdbd"/><rect x="6" y="7" width="1" height="13" fill="#a2a2a2"/><rect x="7" y="4" width="1" height="16" fill="#bdbdbd"/><rect x="8" y="2" width="1" height="18" fill="#a2a2a2"/><rect x="9" y="0" width="1" height="20" fill="#bdbdbd"/><rect x="10" y="2" width="1" height="18" fill="#a2a2a2"/><rect x="11" y="4" width="1" height="16" fill="#bdbdbd"/><rect x="12" y="7" width="1" height="13" fill="#a2a2a2"/><rect x="13" y="7" width="1" height="13" fill="#bdbdbd"/><rect x="14" y="7" width="1" height="13" fill="#a2a2a2"/><rect x="15" y="7" width="1" height="13" fill="#bdbdbd"/><rect x="16" y="7" width="1" height="13" fill="#a2a2a2"/><rect x="17" y="7" width="1" height="13" fill="#bdbdbd"/><rect x="18" y="7" width="1" height="13" fill="#a2a2a2"/><rect x="19" y="7" width="1" height="13" fill="#bdbdbd"/><rect x="20" y="7" width="1" height="13" fill="#a2a2a2"/><rect x="21" y="7" width="1" height="13" fill="#bdbdbd"/><rect x="22" y="7" width="1" height="13" fill="#a2a2a2"/><rect x="23" y="7" width="1" height="13" fill="#bdbdbd"/><rect x="24" y="7" width="1" height="13" fill="#a2a2a2"/><rect x="25" y="7" width="1" height="13" fill="#bdbdbd"/><rect x="26" y="7" width="1" height="13" fill="#a2a2a2"/><rect x="27" y="7" width="1" height="13" fill="#bdbdbd"/><rect x="28" y="7" width="1" height="13" fill="#a2a2a2"/><rect x="29" y="7" width="1" height="13" fill="#bdbdbd"/><rect x="30" y="7" width="1" height="13" fill="#a2a2a2"/><rect x="31" y="7" width="1" height="13" fill="#bdbdbd"/><rect x="32" y="7" width="1" height="13" fill="#a2a2a2"/><rect x="33" y="7" width="1" height="13" fill="#bdbdbd"/></svg>
<div class="r" style="left:34px;top:234px;width:4px;height:20px;background:linear-gradient(90deg,#4a8ed0,#86c2f2);"></div>
<div class="r" style="left:38px;top:248px;width:2px;height:6px;background:#bdbdbd;"></div>
<svg class="r" style="left:200px;top:234px" width="78" height="20"><rect x="0" y="0" width="78" height="20" fill="#e4e4e4"/><rect x="2" y="11" width="1" height="9" fill="#a2a2a2"/><rect x="3" y="11" width="1" height="9" fill="#bdbdbd"/><rect x="4" y="9" width="1" height="11" fill="#a2a2a2"/><rect x="5" y="9" width="1" height="11" fill="#bdbdbd"/><rect x="6" y="7" width="1" height="13" fill="#a2a2a2"/><rect x="7" y="7" width="1" height="13" fill="#bdbdbd"/><rect x="8" y="7" width="1" height="13" fill="#a2a2a2"/><rect x="9" y="7" width="1" height="13" fill="#bdbdbd"/><rect x="10" y="7" width="1" height="13" fill="#a2a2a2"/><rect x="11" y="7" width="1" height="13" fill="#bdbdbd"/><rect x="12" y="7" width="1" height="13" fill="#a2a2a2"/><rect x="13" y="7" width="1" height="13" fill="#bdbdbd"/><rect x="14" y="7" width="1" height="13" fill="#a2a2a2"/><rect x="15" y="7" width="1" height="13" fill="#bdbdbd"/><rect x="16" y="7" width="1" height="13" fill="#a2a2a2"/><rect x="17" y="7" width="1" height="13" fill="#bdbdbd"/><rect x="18" y="7" width="1" height="13" fill="#a2a2a2"/><rect x="19" y="7" width="1" height="13" fill="#bdbdbd"/><rect x="20" y="7" width="1" height="13" fill="#a2a2a2"/><rect x="21" y="7" width="1" height="13" fill="#bdbdbd"/><rect x="22" y="7" width="1" height="13" fill="#a2a2a2"/><rect x="23" y="7" width="1" height="13" fill="#bdbdbd"/><rect x="24" y="7" width="1" height="13" fill="#a2a2a2"/><rect x="25" y="7" width="1" height="13" fill="#bdbdbd"/><rect x="26" y="7" width="1" height="13" fill="#a2a2a2"/><rect x="27" y="7" width="1" height="13" fill="#bdbdbd"/><rect x="28" y="7" width="1" height="13" fill="#a2a2a2"/><rect x="29" y="7" width="1" height="13" fill="#bdbdbd"/><rect x="30" y="7" width="1" height="13" fill="#a2a2a2"/><rect x="31" y="7" width="1" height="13" fill="#bdbdbd"/><rect x="32" y="7" width="1" height="13" fill="#a2a2a2"/><rect x="33" y="7" width="1" height="13" fill="#bdbdbd"/><rect x="34" y="7" width="1" height="13" fill="#a2a2a2"/><rect x="35" y="7" width="1" height="13" fill="#bdbdbd"/><rect x="36" y="7" width="1" height="13" fill="#a2a2a2"/><rect x="37" y="7" width="1" height="13" fill="#bdbdbd"/><rect x="38" y="7" width="1" height="13" fill="#a2a2a2"/><rect x="39" y="7" width="1" height="13" fill="#bdbdbd"/><rect x="40" y="7" width="1" height="13" fill="#a2a2a2"/><rect x="41" y="7" width="1" height="13" fill="#bdbdbd"/><rect x="42" y="7" width="1" height="13" fill="#a2a2a2"/><rect x="43" y="4" width="1" height="16" fill="#bdbdbd"/><rect x="44" y="2" width="1" height="18" fill="#a2a2a2"/><rect x="45" y="0" width="1" height="20" fill="#bdbdbd"/><rect x="46" y="2" width="1" height="18" fill="#a2a2a2"/><rect x="47" y="4" width="1" height="16" fill="#bdbdbd"/><rect x="48" y="7" width="1" height="13" fill="#a2a2a2"/><rect x="49" y="7" width="1" height="13" fill="#bdbdbd"/><rect x="50" y="7" width="1" height="13" fill="#a2a2a2"/><rect x="51" y="7" width="1" height="13" fill="#bdbdbd"/><rect x="52" y="7" width="1" height="13" fill="#a2a2a2"/><rect x="53" y="7" width="1" height="13" fill="#bdbdbd"/><rect x="54" y="7" width="1" height="13" fill="#a2a2a2"/><rect x="55" y="7" width="1" height="13" fill="#bdbdbd"/><rect x="56" y="7" width="1" height="13" fill="#a2a2a2"/><rect x="57" y="7" width="1" height="13" fill="#bdbdbd"/><rect x="58" y="7" width="1" height="13" fill="#a2a2a2"/><rect x="59" y="7" width="1" height="13" fill="#bdbdbd"/><rect x="60" y="7" width="1" height="13" fill="#a2a2a2"/><rect x="61" y="7" width="1" height="13" fill="#bdbdbd"/><rect x="62" y="7" width="1" height="13" fill="#a2a2a2"/><rect x="63" y="7" width="1" height="13" fill="#bdbdbd"/><rect x="64" y="7" width="1" height="13" fill="#a2a2a2"/><rect x="65" y="7" width="1" height="13" fill="#bdbdbd"/><rect x="66" y="7" width="1" height="13" fill="#a2a2a2"/><rect x="67" y="7" width="1" height="13" fill="#bdbdbd"/><rect x="68" y="7" width="1" height="13" fill="#a2a2a2"/><rect x="69" y="7" width="1" height="13" fill="#bdbdbd"/><rect x="70" y="7" width="1" height="13" fill="#a2a2a2"/><rect x="71" y="5" width="1" height="15" fill="#bdbdbd"/></svg>
<div class="r" style="left:272px;top:234px;width:4px;height:20px;background:linear-gradient(90deg,#4a8ed0,#86c2f2);"></div>
<div class="r" style="left:276px;top:248px;width:2px;height:6px;background:#bdbdbd;"></div>
<div class="r" style="left:200px;top:247px;width:2px;height:7px;background:#dd1c1c;"></div>
<svg class="r" style="left:436px;top:234px" width="79" height="20"><rect x="0" y="0" width="79" height="20" fill="#e4e4e4"/><rect x="2" y="11" width="1" height="9" fill="#a2a2a2"/><rect x="3" y="11" width="1" height="9" fill="#bdbdbd"/><rect x="4" y="9" width="1" height="11" fill="#a2a2a2"/><rect x="5" y="9" width="1" height="11" fill="#bdbdbd"/><rect x="6" y="7" width="1" height="13" fill="#a2a2a2"/><rect x="7" y="7" width="1" height="13" fill="#bdbdbd"/><rect x="8" y="7" width="1" height="13" fill="#a2a2a2"/><rect x="9" y="7" width="1" height="13" fill="#bdbdbd"/><rect x="10" y="7" width="1" height="13" fill="#a2a2a2"/><rect x="11" y="7" width="1" height="13" fill="#bdbdbd"/><rect x="12" y="7" width="1" height="13" fill="#a2a2a2"/><rect x="13" y="7" width="1" height="13" fill="#bdbdbd"/><rect x="14" y="7" width="1" height="13" fill="#a2a2a2"/><rect x="15" y="7" width="1" height="13" fill="#bdbdbd"/><rect x="16" y="7" width="1" height="13" fill="#a2a2a2"/><rect x="17" y="7" width="1" height="13" fill="#bdbdbd"/><rect x="18" y="7" width="1" height="13" fill="#a2a2a2"/><rect x="19" y="7" width="1" height="13" fill="#bdbdbd"/><rect x="20" y="7" width="1" height="13" fill="#a2a2a2"/><rect x="21" y="7" width="1" height="13" fill="#bdbdbd"/><rect x="22" y="7" width="1" height="13" fill="#a2a2a2"/><rect x="23" y="7" width="1" height="13" fill="#bdbdbd"/><rect x="24" y="7" width="1" height="13" fill="#a2a2a2"/><rect x="25" y="7" width="1" height="13" fill="#bdbdbd"/><rect x="26" y="7" width="1" height="13" fill="#a2a2a2"/><rect x="27" y="7" width="1" height="13" fill="#bdbdbd"/><rect x="28" y="7" width="1" height="13" fill="#a2a2a2"/><rect x="29" y="7" width="1" height="13" fill="#bdbdbd"/><rect x="30" y="7" width="1" height="13" fill="#a2a2a2"/><rect x="31" y="7" width="1" height="13" fill="#bdbdbd"/><rect x="32" y="7" width="1" height="13" fill="#a2a2a2"/><rect x="33" y="7" width="1" height="13" fill="#bdbdbd"/><rect x="34" y="7" width="1" height="13" fill="#a2a2a2"/><rect x="35" y="7" width="1" height="13" fill="#bdbdbd"/><rect x="36" y="7" width="1" height="13" fill="#a2a2a2"/><rect x="37" y="7" width="1" height="13" fill="#bdbdbd"/><rect x="38" y="7" width="1" height="13" fill="#a2a2a2"/><rect x="39" y="7" width="1" height="13" fill="#bdbdbd"/><rect x="40" y="7" width="1" height="13" fill="#a2a2a2"/><rect x="41" y="7" width="1" height="13" fill="#bdbdbd"/><rect x="42" y="7" width="1" height="13" fill="#a2a2a2"/><rect x="43" y="4" width="1" height="16" fill="#bdbdbd"/><rect x="44" y="2" width="1" height="18" fill="#a2a2a2"/><rect x="45" y="0" width="1" height="20" fill="#bdbdbd"/><rect x="46" y="2" width="1" height="18" fill="#a2a2a2"/><rect x="47" y="4" width="1" height="16" fill="#bdbdbd"/><rect x="48" y="7" width="1" height="13" fill="#a2a2a2"/><rect x="49" y="7" width="1" height="13" fill="#bdbdbd"/><rect x="50" y="7" width="1" height="13" fill="#a2a2a2"/><rect x="51" y="7" width="1" height="13" fill="#bdbdbd"/><rect x="52" y="7" width="1" height="13" fill="#a2a2a2"/><rect x="53" y="7" width="1" height="13" fill="#bdbdbd"/><rect x="54" y="7" width="1" height="13" fill="#a2a2a2"/><rect x="55" y="7" width="1" height="13" fill="#bdbdbd"/><rect x="56" y="7" width="1" height="13" fill="#a2a2a2"/><rect x="57" y="7" width="1" height="13" fill="#bdbdbd"/><rect x="58" y="7" width="1" height="13" fill="#a2a2a2"/><rect x="59" y="7" width="1" height="13" fill="#bdbdbd"/><rect x="60" y="7" width="1" height="13" fill="#a2a2a2"/><rect x="61" y="7" width="1" height="13" fill="#bdbdbd"/><rect x="62" y="7" width="1" height="13" fill="#a2a2a2"/><rect x="63" y="7" width="1" height="13" fill="#bdbdbd"/><rect x="64" y="7" width="1" height="13" fill="#a2a2a2"/><rect x="65" y="7" width="1" height="13" fill="#bdbdbd"/><rect x="66" y="7" width="1" height="13" fill="#a2a2a2"/><rect x="67" y="7" width="1" height="13" fill="#bdbdbd"/><rect x="68" y="7" width="1" height="13" fill="#a2a2a2"/><rect x="69" y="7" width="1" height="13" fill="#bdbdbd"/><rect x="70" y="7" width="1" height="13" fill="#a2a2a2"/><rect x="71" y="7" width="1" height="13" fill="#bdbdbd"/><rect x="72" y="5" width="1" height="15" fill="#a2a2a2"/></svg>
<div class="r" style="left:509px;top:234px;width:4px;height:20px;background:linear-gradient(90deg,#4a8ed0,#86c2f2);"></div>
<div class="r" style="left:513px;top:248px;width:2px;height:6px;background:#bdbdbd;"></div>
<div class="r" style="left:436px;top:247px;width:2px;height:7px;background:#dd1c1c;"></div>
<div class="r" style="left:44px;top:257px;width:94px;height:18px;background:linear-gradient(#ff7078,#f5545e 45%,#e8444e);border:1px solid #a8323a;border-radius:4px"></div>
<div class="t" style="left:55.50px;top:259.47px;font-size:12.5px;line-height:15px;color:#3a1414;letter-spacing:-0.133px;font-weight:normal;">cudaMemcpy</div>
<div class="r" style="left:40.5px;top:260px;width:2px;height:17px;background:#cccccc;"></div>
<div class="r" style="left:42px;top:267px;width:2px;height:10px;background:#55bb55;"></div>
<div class="r" style="left:140px;top:258px;width:3px;height:19px;background:#55bb55;"></div>
<div class="r" style="left:144px;top:257px;width:10px;height:18px;background:linear-gradient(#ff7078,#f5545e 45%,#e8444e);border:1px solid #a8323a;border-radius:4px"></div>
<div class="r" style="left:156px;top:259px;width:2px;height:18px;background:#55bb55;"></div>
<div class="r" style="left:158px;top:259px;width:2px;height:18px;background:#e06060;"></div>
<div class="r" style="left:162px;top:257px;width:12px;height:18px;background:linear-gradient(#70dc70,#4cc84c 50%,#3cb83c);border:1px solid #2a8a2a;border-radius:4px"></div>
<div class="r" style="left:177.5px;top:260px;width:2.5px;height:17px;background:#7a8ad0;"></div>
<div class="r" style="left:180px;top:257px;width:14px;height:18px;background:linear-gradient(#70dc70,#4cc84c 50%,#3cb83c);border:1px solid #2a8a2a;border-radius:4px"></div>
<div class="t" style="left:181.75px;top:259.47px;font-size:12.5px;line-height:15px;color:#1a3a1a;letter-spacing:0.750px;font-weight:normal;">...</div>
<div class="r" style="left:196.5px;top:262px;width:3px;height:15px;background:#c8c8c8;"></div>
<div class="r" style="left:199px;top:270px;width:2px;height:7px;background:#55bb55;"></div>
<div class="r" style="left:282px;top:257px;width:90px;height:18px;background:linear-gradient(#ff7078,#f5545e 45%,#e8444e);border:1px solid #a8323a;border-radius:4px"></div>
<div class="t" style="left:291.60px;top:259.47px;font-size:12.5px;line-height:15px;color:#3a1414;letter-spacing:-0.144px;font-weight:normal;">cudaMemcpy</div>
<div class="r" style="left:280px;top:259px;width:2px;height:18px;background:#55bb55;"></div>
<div class="r" style="left:374.5px;top:258px;width:3px;height:19px;background:#55bb55;"></div>
<div class="r" style="left:378px;top:257px;width:10px;height:18px;background:linear-gradient(#ff7078,#f5545e 45%,#e8444e);border:1px solid #a8323a;border-radius:4px"></div>
<div class="r" style="left:390px;top:259px;width:2px;height:18px;background:#55bb55;"></div>
<div class="r" style="left:392px;top:259px;width:2px;height:18px;background:#e06060;"></div>
<div class="r" style="left:394.5px;top:259px;width:2px;height:18px;background:#c8c8c8;"></div>
<div class="r" style="left:396.5px;top:257px;width:12px;height:18px;background:linear-gradient(#70dc70,#4cc84c 50%,#3cb83c);border:1px solid #2a8a2a;border-radius:4px"></div>
<div class="r" style="left:410.29999999999995px;top:260px;width:1.5px;height:17px;background:#c8c8c8;"></div>
<div class="r" style="left:412px;top:257px;width:18px;height:18px;background:linear-gradient(#70dc70,#4cc84c 50%,#3cb83c);border:1px solid #2a8a2a;border-radius:4px"></div>
<div class="t" style="left:415.75px;top:259.47px;font-size:12.5px;line-height:15px;color:#1a3a1a;letter-spacing:0.750px;font-weight:normal;">...</div>
<div class="r" style="left:432.5px;top:262px;width:3px;height:15px;background:#c8c8c8;"></div>
<div class="r" style="left:436px;top:270px;width:2px;height:7px;background:#55bb55;"></div>
<div class="r" style="left:518px;top:257px;width:88px;height:18px;background:linear-gradient(#ff7078,#f5545e 45%,#e8444e);border:1px solid #a8323a;border-radius:4px"></div>
<div class="t" style="left:526.80px;top:259.47px;font-size:12.5px;line-height:15px;color:#3a1414;letter-spacing:-0.167px;font-weight:normal;">cudaMemcpy</div>
<div class="r" style="left:516px;top:259px;width:2px;height:18px;background:#55bb55;"></div>
<div class="r" style="left:608px;top:258px;width:2px;height:19px;background:#55bb55;"></div>
<div class="r" style="left:610px;top:258px;width:2px;height:19px;background:#c8c8c8;"></div>
<div class="r" style="left:612px;top:257px;width:10px;height:18px;background:linear-gradient(#ff7078,#f5545e 45%,#e8444e);border:1px solid #a8323a;border-radius:4px"></div>
<div class="r" style="left:624px;top:259px;width:2px;height:18px;background:#55bb55;"></div>
<div class="r" style="left:626px;top:259px;width:2px;height:18px;background:#e06060;"></div>
<div class="r" style="left:628px;top:259px;width:2px;height:18px;background:#c8c8c8;"></div>
<div class="r" style="left:630px;top:257px;width:18px;height:18px;background:linear-gradient(#70dc70,#4cc84c 50%,#3cb83c);border:1px solid #2a8a2a;border-radius:4px"></div>
<div class="r" style="left:6px;top:280px;width:6px;height:20px;background:linear-gradient(#a6a6a6,#d4d4d4 50%,#a6a6a6);"></div>
<div class="r" style="left:34px;top:280px;width:5px;height:20px;background:linear-gradient(#a6a6a6,#d4d4d4 50%,#a6a6a6);"></div>
<div class="r" style="left:244px;top:280px;width:4px;height:20px;background:linear-gradient(#a6a6a6,#d4d4d4 50%,#a6a6a6);"></div>
<div class="r" style="left:270px;top:280px;width:6px;height:20px;background:linear-gradient(#a6a6a6,#d4d4d4 50%,#a6a6a6);"></div>
<div class="r" style="left:480px;top:280px;width:4px;height:20px;background:linear-gradient(#a6a6a6,#d4d4d4 50%,#a6a6a6);"></div>
<div class="r" style="left:506px;top:280px;width:6px;height:20px;background:linear-gradient(#a6a6a6,#d4d4d4 50%,#a6a6a6);"></div>
<div class="r" style="left:0px;top:349px;width:645px;height:6px;background:#fad3b7;"></div>
<div class="r" style="left:8px;top:324px;width:136px;height:17px;background:#1db55c;"></div>
<div class="r" style="left:8px;top:324px;width:2px;height:3px;background:#dddddd;"></div>
<div class="r" style="left:142px;top:324px;width:2px;height:5px;background:#dddddd;"></div>
<div class="r" style="left:8px;top:342px;width:136px;height:6px;background:#45537f;"></div>
<div class="r" style="left:8px;top:349px;width:136px;height:5px;background:#138a3e;"></div>
<div class="r" style="left:10px;top:354px;width:132px;height:1px;background:#138a3e;"></div>
<div class="r" style="left:11px;top:356px;width:2px;height:6px;background:#f2a20c;"></div>
<div class="r" style="left:19px;top:356px;width:2px;height:6px;background:#f2a20c;"></div>
<div class="r" style="left:27px;top:356px;width:2px;height:6px;background:#f2a20c;"></div>
<div class="r" style="left:35px;top:356px;width:2px;height:6px;background:#f2a20c;"></div>
<div class="r" style="left:43px;top:356px;width:2px;height:6px;background:#f2a20c;"></div>
<div class="r" style="left:51px;top:356px;width:2px;height:6px;background:#f2a20c;"></div>
<div class="r" style="left:59px;top:356px;width:2px;height:6px;background:#f2a20c;"></div>
<div class="r" style="left:67px;top:356px;width:2px;height:6px;background:#f2a20c;"></div>
<div class="r" style="left:75px;top:356px;width:2px;height:6px;background:#f2a20c;"></div>
<div class="r" style="left:83px;top:356px;width:2px;height:6px;background:#f2a20c;"></div>
<div class="r" style="left:91px;top:356px;width:2px;height:6px;background:#f2a20c;"></div>
<div class="r" style="left:101px;top:356px;width:2px;height:6px;background:#f2a20c;"></div>
<div class="r" style="left:109px;top:356px;width:2px;height:6px;background:#f2a20c;"></div>
<div class="r" style="left:119px;top:356px;width:2px;height:6px;background:#f2a20c;"></div>
<div class="r" style="left:129px;top:356px;width:2px;height:6px;background:#f2a20c;"></div>
<div class="r" style="left:137px;top:356px;width:2px;height:6px;background:#f2a20c;"></div>
<div class="r" style="left:244px;top:324px;width:118px;height:17px;background:#1db55c;"></div>
<div class="r" style="left:244px;top:324px;width:2px;height:3px;background:#dddddd;"></div>
<div class="r" style="left:360px;top:324px;width:2px;height:5px;background:#dddddd;"></div>
<div class="r" style="left:244px;top:342px;width:118px;height:6px;background:#45537f;"></div>
<div class="r" style="left:244px;top:349px;width:118px;height:5px;background:#138a3e;"></div>
<div class="r" style="left:246px;top:354px;width:114px;height:1px;background:#138a3e;"></div>
<div class="r" style="left:245px;top:356px;width:2px;height:6px;background:#f2a20c;"></div>
<div class="r" style="left:253px;top:356px;width:2px;height:6px;background:#f2a20c;"></div>
<div class="r" style="left:261px;top:356px;width:2px;height:6px;background:#f2a20c;"></div>
<div class="r" style="left:269px;top:356px;width:2px;height:6px;background:#f2a20c;"></div>
<div class="r" style="left:277px;top:356px;width:2px;height:6px;background:#f2a20c;"></div>
<div class="r" style="left:285px;top:356px;width:2px;height:6px;background:#f2a20c;"></div>
<div class="r" style="left:295px;top:356px;width:2px;height:6px;background:#f2a20c;"></div>
<div class="r" style="left:303px;top:356px;width:2px;height:6px;background:#f2a20c;"></div>
<div class="r" style="left:311px;top:356px;width:2px;height:6px;background:#f2a20c;"></div>
<div class="r" style="left:319px;top:356px;width:2px;height:6px;background:#f2a20c;"></div>
<div class="r" style="left:329px;top:356px;width:2px;height:6px;background:#f2a20c;"></div>
<div class="r" style="left:339px;top:356px;width:2px;height:6px;background:#f2a20c;"></div>
<div class="r" style="left:347px;top:356px;width:2px;height:6px;background:#f2a20c;"></div>
<div class="r" style="left:357px;top:356px;width:2px;height:6px;background:#f2a20c;"></div>
<div class="r" style="left:480px;top:324px;width:136px;height:17px;background:#1db55c;"></div>
<div class="r" style="left:480px;top:324px;width:2px;height:3px;background:#dddddd;"></div>
<div class="r" style="left:614px;top:324px;width:2px;height:5px;background:#dddddd;"></div>
<div class="r" style="left:480px;top:342px;width:136px;height:6px;background:#45537f;"></div>
<div class="r" style="left:480px;top:349px;width:136px;height:5px;background:#138a3e;"></div>
<div class="r" style="left:482px;top:354px;width:132px;height:1px;background:#138a3e;"></div>
<div class="r" style="left:485px;top:356px;width:2px;height:6px;background:#f2a20c;"></div>
<div class="r" style="left:493px;top:356px;width:2px;height:6px;background:#f2a20c;"></div>
<div class="r" style="left:503px;top:356px;width:2px;height:6px;background:#f2a20c;"></div>
<div class="r" style="left:511px;top:356px;width:2px;height:6px;background:#f2a20c;"></div>
<div class="r" style="left:519px;top:356px;width:2px;height:6px;background:#f2a20c;"></div>
<div class="r" style="left:527px;top:356px;width:2px;height:6px;background:#f2a20c;"></div>
<div class="r" style="left:535px;top:356px;width:2px;height:6px;background:#f2a20c;"></div>
<div class="r" style="left:543px;top:356px;width:2px;height:6px;background:#f2a20c;"></div>
<div class="r" style="left:551px;top:356px;width:2px;height:6px;background:#f2a20c;"></div>
<div class="r" style="left:559px;top:356px;width:2px;height:6px;background:#f2a20c;"></div>
<div class="r" style="left:567px;top:356px;width:2px;height:6px;background:#f2a20c;"></div>
<div class="r" style="left:577px;top:356px;width:2px;height:6px;background:#f2a20c;"></div>
<div class="r" style="left:585px;top:356px;width:2px;height:6px;background:#f2a20c;"></div>
<div class="r" style="left:595px;top:356px;width:2px;height:6px;background:#f2a20c;"></div>
<div class="r" style="left:603px;top:356px;width:2px;height:6px;background:#f2a20c;"></div>
<div class="r" style="left:611px;top:356px;width:2px;height:6px;background:#f2a20c;"></div>
<svg class="r" style="left:0px;top:413px" width="645" height="6"><defs><pattern id="dots" width="4" height="4" patternUnits="userSpaceOnUse"><rect width="4" height="4" fill="#a3826d"/><rect x="1" y="0" width="1" height="1" fill="#eee6de"/><rect x="3" y="2" width="1" height="1" fill="#eee6de"/></pattern></defs><rect width="645" height="6" fill="url(#dots)"/></svg>
<div class="r" style="left:-20px;top:429px;width:700px;height:20px;background:linear-gradient(#a4916f 0px,#a4916f 1px,#fde2bd 1px,#fff5e8 50%,#fde2bd 19px,#a4916f 19px);"></div>
<div class="r" style="left:0px;top:430px;width:34px;height:18px;background:linear-gradient(90deg,rgba(255,255,255,0.95),rgba(255,255,255,0));"></div>
<div class="t" style="left:410.80px;top:431.64px;font-size:12px;line-height:14px;color:#3a3a3a;letter-spacing:0.467px;font-weight:normal;">poll</div>
<div class="r" style="left:0px;top:500px;width:645px;height:6px;background:#fad3b7;"></div>
</div>
<div class="r" style="left:414px;top:117px;width:1px;height:558px;background:#1f8ef8;"></div>
<div class="r" style="left:415px;top:117px;width:1px;height:558px;background:rgba(150,235,255,0.45);"></div>
<svg class="r" style="left:408px;top:275px" width="14" height="12"><path d="M1.5 1.8H11.8L6.6 10.8Z" fill="#fff" stroke="#3a92f0" stroke-width="1.7"/></svg>
<div class="r" style="left:15px;top:286px;width:355px;height:65px;background:#74a8d6;"></div>
<div class="r" style="left:370px;top:286px;width:5px;height:65px;background:#3ecfe6;"></div>
<div class="r" style="left:370px;top:150px;width:5px;height:26px;background:#80fcff;"></div>
<svg class="r" style="left:47px;top:130px" width="6" height="8"><path d="M0.5 0.5L4.8 3.8L0.5 7Z" fill="#555"/></svg>
<div class="t" style="left:62.20px;top:127.77px;font-size:12.5px;line-height:15px;color:#141414;letter-spacing:0.459px;font-weight:normal;">CPU frame duration</div>
<svg class="r" style="left:37px;top:158px" width="6" height="8"><path d="M0.5 0.5L4.8 3.8L0.5 7Z" fill="#555"/></svg>
<div class="t" style="left:52.80px;top:155.67px;font-size:12.5px;line-height:15px;color:#141414;letter-spacing:0.403px;font-weight:normal;">CUDA HW (0000:17:00.0 - Quadro GV100)</div>
<svg class="r" style="left:354px;top:155px" width="11" height="16"><path d="M1 2.2H5.5V13" stroke="#2a5f8f" stroke-width="2" fill="none"/><path d="M2.3 10.8L5.5 14.2L8.7 10.8" stroke="#2a5f8f" stroke-width="2" fill="none"/></svg>
<div class="t" style="left:52.80px;top:182.17px;font-size:12.5px;line-height:15px;color:#141414;letter-spacing:0.100px;font-weight:normal;">OpenGL HW</div>
<svg class="r" style="left:36px;top:209px" width="9" height="5"><path d="M0 0H8L4 4Z" fill="#666"/></svg>
<div class="t" style="left:53.30px;top:203.67px;font-size:12.5px;line-height:15px;color:#141414;letter-spacing:0.427px;font-weight:normal;">Threads (11)</div>
<svg class="r" style="left:46px;top:240px" width="9" height="5"><path d="M0 0H8L4 4Z" fill="#666"/></svg>
<div class="r" style="left:59px;top:235px;width:12px;height:12px;border:1px solid #a9a9a9;border-radius:1px;background:#fff"></div>
<svg class="r" style="left:61px;top:237px" width="10" height="11"><path d="M1.3 4.9L3.5 9.2L8.2 1.1" stroke="#000" stroke-width="1.9" fill="none" stroke-linecap="round" stroke-linejoin="round"/></svg>
<div class="t" style="left:78.90px;top:236.37px;font-size:12.5px;line-height:15px;color:#30b86c;letter-spacing:0.495px;font-weight:normal;">[14485] smokeParticles</div>
<svg class="r" style="left:228.5px;top:242px" width="8" height="5"><path d="M0 0H7L3.5 4Z" fill="#111"/></svg>
<div class="t" style="left:73.00px;top:267.97px;font-size:12.5px;line-height:15px;color:#141414;letter-spacing:0.511px;font-weight:normal;">OS runtime libraries</div>
<div class="t" style="left:72.90px;top:311.97px;font-size:12.5px;line-height:15px;color:#141414;letter-spacing:-0.367px;font-weight:normal;">NVTX</div>
<div class="t" style="left:73.00px;top:355.97px;font-size:12.5px;line-height:15px;color:#141414;letter-spacing:0.326px;font-weight:normal;">OpenGL API (4.6.0 NVIDIA 520.36)</div>
<div class="t" style="left:73.00px;top:378.67px;font-size:12.5px;line-height:15px;color:#141414;letter-spacing:-0.100px;font-weight:normal;">CUDA API</div>
<div class="t" style="left:73.20px;top:411.47px;font-size:12.5px;line-height:15px;color:#858585;letter-spacing:0.413px;font-weight:normal;">Profiler overhead</div>
<svg class="r" style="left:46px;top:460px" width="9" height="5"><path d="M0 0H8L4 4Z" fill="#666"/></svg>
<div class="r" style="left:59px;top:455px;width:12px;height:12px;border:1px solid #a9a9a9;border-radius:1px;background:#fff"></div>
<svg class="r" style="left:61px;top:457px" width="10" height="11"><path d="M1.3 4.9L3.5 9.2L8.2 1.1" stroke="#000" stroke-width="1.9" fill="none" stroke-linecap="round" stroke-linejoin="round"/></svg>
<div class="t" style="left:78.90px;top:454.97px;font-size:12.5px;line-height:15px;color:#858585;letter-spacing:0.700px;font-weight:normal;">[14533] [NSys]</div>
<svg class="r" style="left:178.5px;top:462px" width="8" height="5"><path d="M0 0H7L3.5 4Z" fill="#111"/></svg>
<div class="t" style="left:73.20px;top:486.77px;font-size:12.5px;line-height:15px;color:#858585;letter-spacing:0.413px;font-weight:normal;">Profiler overhead</div>
<svg class="r" style="left:46px;top:523px" width="9" height="5"><path d="M0 0H8L4 4Z" fill="#666"/></svg>
<div class="r" style="left:59px;top:518px;width:12px;height:12px;border:1px solid #a9a9a9;border-radius:1px;background:#fff"></div>
<svg class="r" style="left:61px;top:520px" width="10" height="11"><path d="M1.3 4.9L3.5 9.2L8.2 1.1" stroke="#000" stroke-width="1.9" fill="none" stroke-linecap="round" stroke-linejoin="round"/></svg>
<div class="t" style="left:78.90px;top:519.17px;font-size:12.5px;line-height:15px;color:#30b86c;letter-spacing:0.600px;font-weight:normal;">[14541] cuda-EvtHandlr</div>
<svg class="r" style="left:231.5px;top:525px" width="8" height="5"><path d="M0 0H7L3.5 4Z" fill="#111"/></svg>
<div class="t" style="left:73.00px;top:550.57px;font-size:12.5px;line-height:15px;color:#141414;letter-spacing:0.511px;font-weight:normal;">OS runtime libraries</div>
<div class="t" style="left:73.20px;top:573.67px;font-size:12.5px;line-height:15px;color:#858585;letter-spacing:0.413px;font-weight:normal;">Profiler overhead</div>
<svg class="r" style="left:46px;top:610px" width="9" height="5"><path d="M0 0H8L4 4Z" fill="#666"/></svg>
<div class="r" style="left:59px;top:605px;width:12px;height:12px;border:1px solid #a9a9a9;border-radius:1px;background:#fff"></div>
<svg class="r" style="left:61px;top:607px" width="10" height="11"><path d="M1.3 4.9L3.5 9.2L8.2 1.1" stroke="#000" stroke-width="1.9" fill="none" stroke-linecap="round" stroke-linejoin="round"/></svg>
<div class="t" style="left:78.90px;top:605.37px;font-size:12.5px;line-height:15px;color:#858585;letter-spacing:0.584px;font-weight:normal;">[14534] [NSys Comms]</div>
<svg class="r" style="left:227.5px;top:612px" width="8" height="5"><path d="M0 0H7L3.5 4Z" fill="#111"/></svg>
<div class="t" style="left:73.20px;top:637.57px;font-size:12.5px;line-height:15px;color:#858585;letter-spacing:0.413px;font-weight:normal;">Profiler overhead</div>
<svg class="r" style="left:46px;top:674px" width="9" height="5"><path d="M0 0H8L4 4Z" fill="#666"/></svg>
<div class="r" style="left:59px;top:669px;width:12px;height:12px;border:1px solid #a9a9a9;border-radius:1px;background:#fff"></div>
<svg class="r" style="left:61px;top:671px" width="10" height="11"><path d="M1.3 4.9L3.5 9.2L8.2 1.1" stroke="#000" stroke-width="1.9" fill="none" stroke-linecap="round" stroke-linejoin="round"/></svg>
<div class="t" style="left:78.90px;top:668.97px;font-size:12.5px;line-height:15px;color:#858585;letter-spacing:0.427px;font-weight:normal;">[14539] CUPTI worker thread</div>
<svg class="r" style="left:262px;top:676px" width="8" height="5"><path d="M0 0H7L3.5 4Z" fill="#111"/></svg>
<div class="r" style="left:210px;top:222px;width:32px;height:32px;border-style:solid;border-color:#e8141e;border-width:5px 5px 5px 4px"></div>
</body></html>
